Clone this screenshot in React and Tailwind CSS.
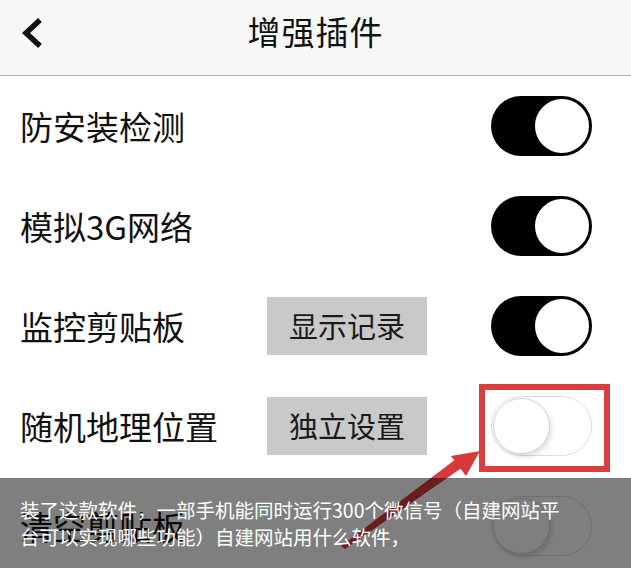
import React from 'react';

const FONT = { fontFamily: '"Noto Sans CJK SC", "Noto Sans", sans-serif' };

const ROWS = [
  { label: '防安装检测', on: true },
  { label: '模拟3G网络', on: true },
  { label: '监控剪贴板', button: '显示记录', on: true },
  { label: '随机地理位置', button: '独立设置', on: false },
  { label: '清空剪贴板', on: false },
];

const Toggle = ({ on }) => {
  if (on) {
    return (
      <div className="w-[101px] h-[60px] rounded-full bg-black flex items-center justify-end pr-px">
        <div className="w-[58px] h-[58px] rounded-full bg-white border-2 border-black" />
      </div>
    );
  }
  return (
    <div className="w-[101px] h-[60px] rounded-full bg-white border border-[#dedede] flex items-center pl-px">
      <div className="w-[57px] h-[56px] rounded-full bg-white border border-[#d2d2d2] shadow-[2px_3px_4px_rgba(0,0,0,0.12)]" />
    </div>
  );
};

const Row = ({ label, button, on }) => (
  <div className="h-[100px] flex items-center pl-5 pr-[39px]">
    <div className="w-[247px] text-[33px] leading-none text-[#111]">{label}</div>
    {button && (
      <div className="w-[160px] h-[58px] bg-[#c9c9c9] flex items-center justify-center text-[29px] text-[#1a1a1a]">
        {button}
      </div>
    )}
    <div className="ml-auto">
      <Toggle on={on} />
    </div>
  </div>
);

export default function App() {
  return (
    <div className="relative w-[631px] h-[568px] overflow-hidden bg-white" style={FONT}>
      <div className="h-[76px] bg-[#f7f7f7] border-b border-[#b4b4b4] grid grid-cols-[1fr_auto_1fr] items-start pt-[12px]">
        <div className="pl-[20px] pt-[6px]">
          <svg width="24" height="30" viewBox="0 0 24 30">
            <path d="M20 2 L6 15 L20 28" fill="none" stroke="#111" strokeWidth="5.5" strokeLinejoin="miter" />
          </svg>
        </div>
        <div className="text-[33px] leading-[38px] text-[#111] tracking-[1px]">增强插件</div>
        <div />
      </div>

      {ROWS.map((r) => (
        <Row key={r.label} {...r} />
      ))}

      {/* annotation: red box + arrow */}
      <div className="absolute left-[479px] top-[384px] w-[131px] h-[88px] border-[6px] border-[#dc3d3d]" />
      <svg className="absolute left-0 top-0" width="631" height="568" viewBox="0 0 631 568">
        <polygon points="341,546 345,549 463,467 456,459" fill="#d63a3a" />
        <polygon points="480,451 451,456 466,476" fill="#d63a3a" />
      </svg>

      {/* caption overlay */}
      <div className="absolute left-0 right-0 top-[478px] bottom-0 bg-black/50 px-5 pt-[18px] text-[19.5px] leading-[27px] text-white">
        <div>装了这款软件，一部手机能同时运行300个微信号（自建网站平</div>
        <div>台可以实现哪些功能）自建网站用什么软件，</div>
      </div>
    </div>
  );
}
